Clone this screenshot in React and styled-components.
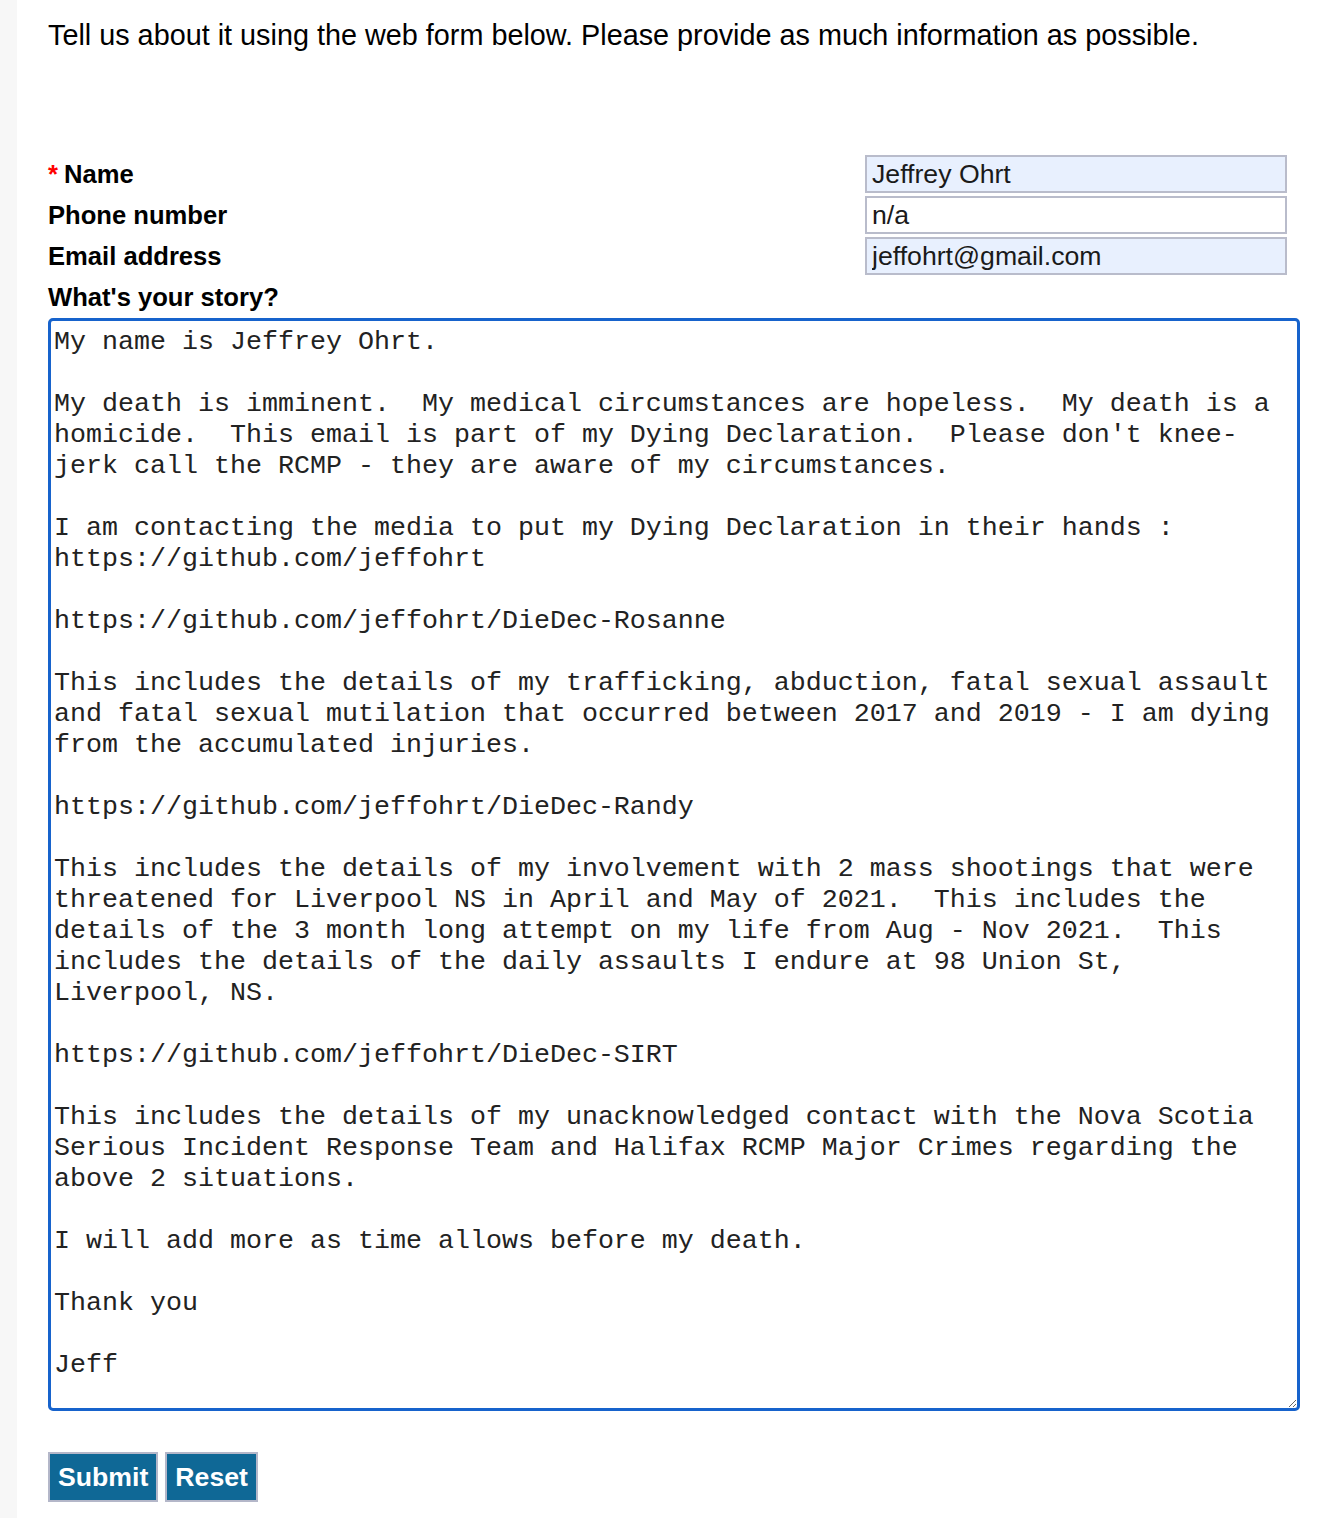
import React from 'react';
import styled, { createGlobalStyle } from 'styled-components';

const GlobalStyle = createGlobalStyle`
  html, body {
    margin: 0;
    padding: 0;
    background: #ffffff;
  }
  body {
    font-family: "Liberation Sans", Arial, sans-serif;
    color: #000;
  }
`;

const Page = styled.div`
  display: flex;
  min-height: 1518px;
`;

const Gutter = styled.div`
  width: 17px;
  flex-shrink: 0;
  background: #f7f7f7;
`;

const Main = styled.main`
  flex: 1;
  padding: 16px 44px 0 31px;
`;

const Intro = styled.p`
  margin: 0;
  font-size: 28.8px;
  line-height: 38px;
`;

const Form = styled.form`
  margin-top: 101px;
  display: flex;
  flex-direction: column;
`;

const Row = styled.div`
  display: grid;
  grid-template-columns: 1fr 422px;
  align-items: center;
  padding-right: 13px;
  margin-bottom: 3px;
`;

const Label = styled.label`
  font-size: 25.6px;
  font-weight: bold;
  line-height: 30px;
`;

const Required = styled.span`
  color: #ff0000;
  margin-right: 6px;
`;

const Input = styled.input`
  box-sizing: border-box;
  width: 422px;
  height: 38px;
  margin: 0;
  padding: 0 5px;
  border: 2px solid #b9bccb;
  border-radius: 0;
  background: ${props => (props.filled ? '#e8f0fe' : '#ffffff')};
  font-family: "Liberation Sans", Arial, sans-serif;
  font-size: 26.67px;
  color: #1a1a1a;
  outline: none;
`;

const StoryLabel = styled(Label)`
  display: block;
  margin-top: 4px;
  margin-bottom: 6px;
`;

const Story = styled.textarea`
  box-sizing: border-box;
  width: 1252px;
  height: 1093px;
  margin: 0;
  padding: 6px 3px 2px;
  border: 3px solid #1763cc;
  border-radius: 5px;
  font-family: "Liberation Mono", "Courier New", monospace;
  font-size: 26.67px;
  line-height: 31px;
  color: #222222;
  background: #fff;
  outline: none;
  overflow: hidden;
`;

const Buttons = styled.div`
  display: flex;
  gap: 7px;
  margin-top: 41px;
`;

const Button = styled.button`
  box-sizing: border-box;
  height: 50px;
  padding: 0 8px;
  border: 2px solid #b4b7c9;
  border-radius: 0;
  background: #0f6896;
  color: #ffffff;
  font-family: "Liberation Sans", Arial, sans-serif;
  font-size: 26.67px;
  font-weight: bold;
  cursor: pointer;
`;

const story = `My name is Jeffrey Ohrt.

My death is imminent.  My medical circumstances are hopeless.  My death is a homicide.  This email is part of my Dying Declaration.  Please don't knee-jerk call the RCMP - they are aware of my circumstances.

I am contacting the media to put my Dying Declaration in their hands : https://github.com/jeffohrt

https://github.com/jeffohrt/DieDec-Rosanne

This includes the details of my trafficking, abduction, fatal sexual assault and fatal sexual mutilation that occurred between 2017 and 2019 - I am dying from the accumulated injuries.

https://github.com/jeffohrt/DieDec-Randy

This includes the details of my involvement with 2 mass shootings that were threatened for Liverpool NS in April and May of 2021.  This includes the details of the 3 month long attempt on my life from Aug - Nov 2021.  This includes the details of the daily assaults I endure at 98 Union St, Liverpool, NS.

https://github.com/jeffohrt/DieDec-SIRT

This includes the details of my unacknowledged contact with the Nova Scotia Serious Incident Response Team and Halifax RCMP Major Crimes regarding the above 2 situations.

I will add more as time allows before my death.

Thank you

Jeff`;

const fields = [
  { id: 'name', label: 'Name', value: 'Jeffrey Ohrt', required: true, filled: true },
  { id: 'phone', label: 'Phone number', value: 'n/a' },
  { id: 'email', label: 'Email address', value: 'jeffohrt@gmail.com', filled: true },
];

export default function App() {
  return (
    <Page>
      <GlobalStyle />
      <Gutter />
      <Main>
        <Intro>Tell us about it using the web form below. Please provide as much information as possible.</Intro>
        <Form onSubmit={e => e.preventDefault()}>
          {fields.map(f => (
            <Row key={f.id}>
              <Label htmlFor={f.id}>
                {f.required && <Required>*</Required>}
                {f.label}
              </Label>
              <Input id={f.id} defaultValue={f.value} filled={f.filled ? 1 : 0} />
            </Row>
          ))}
          <StoryLabel htmlFor="story">What's your story?</StoryLabel>
          <Story id="story" defaultValue={story} spellCheck={false} />
          <Buttons>
            <Button type="submit">Submit</Button>
            <Button type="reset">Reset</Button>
          </Buttons>
        </Form>
      </Main>
    </Page>
  );
}
